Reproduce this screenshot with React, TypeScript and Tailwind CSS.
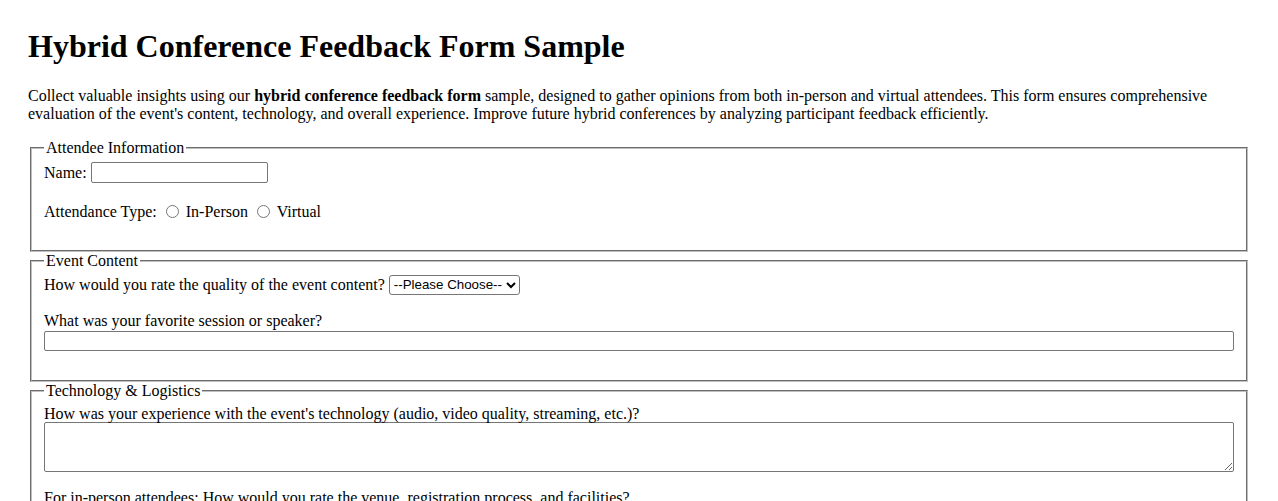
import React from 'react';

const serif = "font-['Liberation_Serif','Times_New_Roman',serif]";
const sans = "font-['Liberation_Sans',Arial,sans-serif]";

const fieldsetCls =
  'mx-[2px] px-[12px] pt-[4.6px] pb-[10px] border-2 [border-style:groove] border-[#c0c0c0] min-w-0';
const legendCls = 'px-[2px] leading-[18px]';
const textInputCls = `${sans} text-[13.33px] border border-[#767676] rounded-[2px] px-[2px] py-[1px] bg-white`;
const radioCls = 'ml-[5px] mr-[3px] mt-[3px] w-[13px] h-[13px] align-[-1px]';

const Fieldset: React.FC<{ legend: string; children: React.ReactNode }> = ({ legend, children }) => (
  <fieldset className={fieldsetCls}>
    <legend className={legendCls}>{legend}</legend>
    {children}
  </fieldset>
);

export default function App() {
  return (
    <div className={`${serif} bg-white text-black min-h-screen px-[28px] pt-[28px] pb-[40px] text-[16px]`}>
      <h1 className="text-[32px] font-bold leading-[37px] mb-[22px]">Hybrid Conference Feedback Form Sample</h1>

      <p className="leading-[18px] mb-[16px]">
        Collect valuable insights using our <b>hybrid conference feedback form</b> sample, designed to gather
        opinions from both in-person and virtual attendees. This form ensures comprehensive evaluation of the
        event's content, technology, and overall experience. Improve future hybrid conferences by analyzing
        participant feedback efficiently.
      </p>

      <form>
        <Fieldset legend="Attendee Information">
          <div className="flex items-center gap-[4px] h-[22px]">
            <label htmlFor="name">Name:</label>
            <input id="name" type="text" className={`${textInputCls} w-[177px] h-[21px]`} />
          </div>
          <div className="mt-[18px] leading-[18px] mb-[19px]">
            Attendance Type: <input type="radio" name="att" className={radioCls} /> In-Person{' '}
            <input type="radio" name="att" className={radioCls} /> Virtual
          </div>
        </Fieldset>

        <Fieldset legend="Event Content">
          <div className="flex items-center gap-[4px] h-[21px]">
            <label>How would you rate the quality of the event content?</label>
            <select
              className={`${sans} text-[13.33px] h-[20px] w-[131px] border border-[#767676] rounded-[3px] bg-white`}
              defaultValue=""
            >
              <option value="">--Please Choose--</option>
              <option>Excellent</option>
              <option>Good</option>
              <option>Average</option>
              <option>Poor</option>
            </select>
          </div>
          <div className="mt-[17px] leading-[18px]">What was your favorite session or speaker?</div>
          <input type="text" className={`${textInputCls} block w-full h-[20px] mt-[1px] mb-[19px]`} />
        </Fieldset>

        <Fieldset legend="Technology & Logistics">
          <div className="leading-[18px]">
            How was your experience with the event's technology (audio, video quality, streaming, etc.)?
          </div>
          <textarea className={`${textInputCls} block w-full h-[50px] -mt-[1px] mb-[17px]`} />
          <div className="leading-[18px]">
            For in-person attendees: How would you rate the venue, registration process, and facilities?
          </div>
          <textarea className={`${textInputCls} block w-full h-[50px] mb-[17px]`} />
        </Fieldset>

        <Fieldset legend="Overall Experience">
          <div className="leading-[18px]">What improvements would you suggest for future hybrid conferences?</div>
          <textarea className={`${textInputCls} block w-full h-[50px] mb-[17px]`} />
        </Fieldset>

        <div className="mt-[16px]">
          <button
            type="submit"
            className={`${sans} text-[13.33px] border border-[#767676] rounded-[3px] bg-[#efefef] px-[6px] py-[1px]`}
          >
            Submit Feedback
          </button>
        </div>
      </form>
    </div>
  );
}
